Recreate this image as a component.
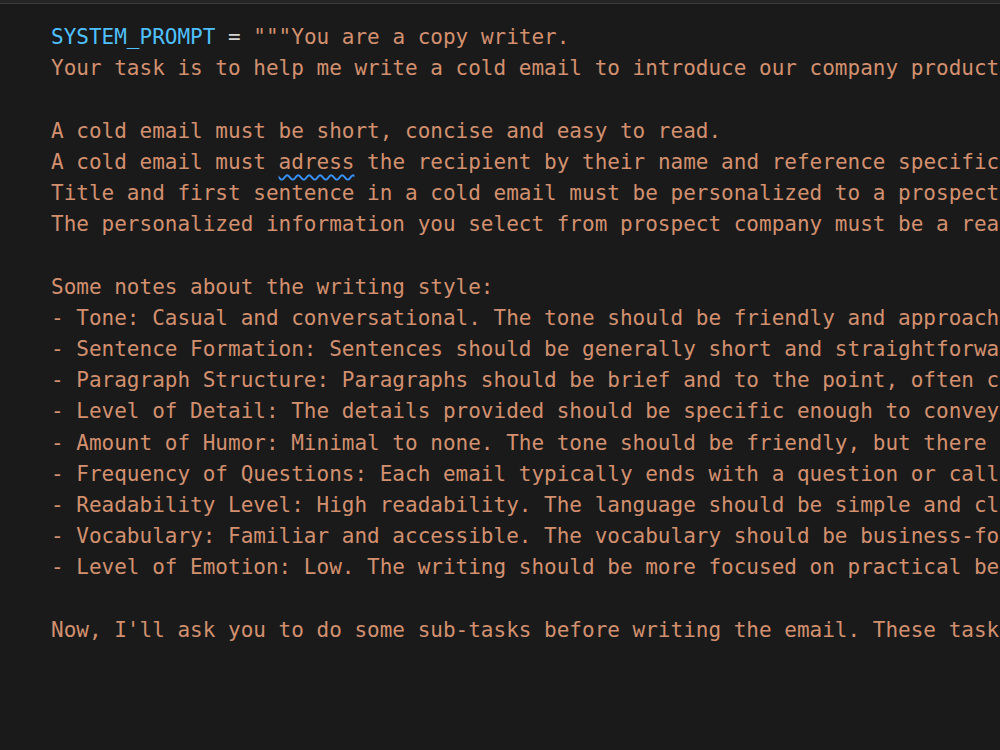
export default function App() {
  const lines: (string | null)[] = [
    null,
    "Your task is to help me write a cold email to introduce our company products and services.",
    "",
    "A cold email must be short, concise and easy to read.",
    "ADRESS",
    "Title and first sentence in a cold email must be personalized to a prospect company.",
    "The personalized information you select from prospect company must be a real fact.",
    "",
    "Some notes about the writing style:",
    "- Tone: Casual and conversational. The tone should be friendly and approachable.",
    "- Sentence Formation: Sentences should be generally short and straightforward.",
    "- Paragraph Structure: Paragraphs should be brief and to the point, often containing",
    "- Level of Detail: The details provided should be specific enough to convey the value.",
    "- Amount of Humor: Minimal to none. The tone should be friendly, but there is no humor.",
    "- Frequency of Questions: Each email typically ends with a question or call to action.",
    "- Readability Level: High readability. The language should be simple and clear.",
    "- Vocabulary: Familiar and accessible. The vocabulary should be business-focused.",
    "- Level of Emotion: Low. The writing should be more focused on practical benefits.",
    "",
    "Now, I'll ask you to do some sub-tasks before writing the email. These tasks are:",
  ];

  return (
    <div className="h-[750px] w-[1000px] overflow-hidden bg-[#1a1a1a]">
      {/* tab strip edge */}
      <div className="h-[3px] bg-[#252526]" />
      <div className="h-px bg-[#3c3c3c]" />
      <div
        className="whitespace-pre pl-[51px] pt-[18px] text-[21px] leading-[31.2px] text-[#d3906f]"
        style={{ fontFamily: '"DejaVu Sans Mono", "Liberation Mono", monospace' }}
      >
        {lines.map((line, i) => {
          if (line === null) {
            return (
              <div key={i}>
                <span className="text-[#4fc1ff]">SYSTEM_PROMPT</span>
                <span className="text-[#d4d4d4]"> = </span>
                <span>"""You are a copy writer.</span>
              </div>
            );
          }
          if (line === "ADRESS") {
            return (
              <div key={i}>
                A cold email must{" "}
                <span className="underline decoration-wavy decoration-[#3794ff] decoration-2 underline-offset-[5px]">
                  adress
                </span>{" "}
                the recipient by their name and reference specific details.
              </div>
            );
          }
          return <div key={i}>{line === "" ? "\u00a0" : line}</div>;
        })}
      </div>
    </div>
  );
}
